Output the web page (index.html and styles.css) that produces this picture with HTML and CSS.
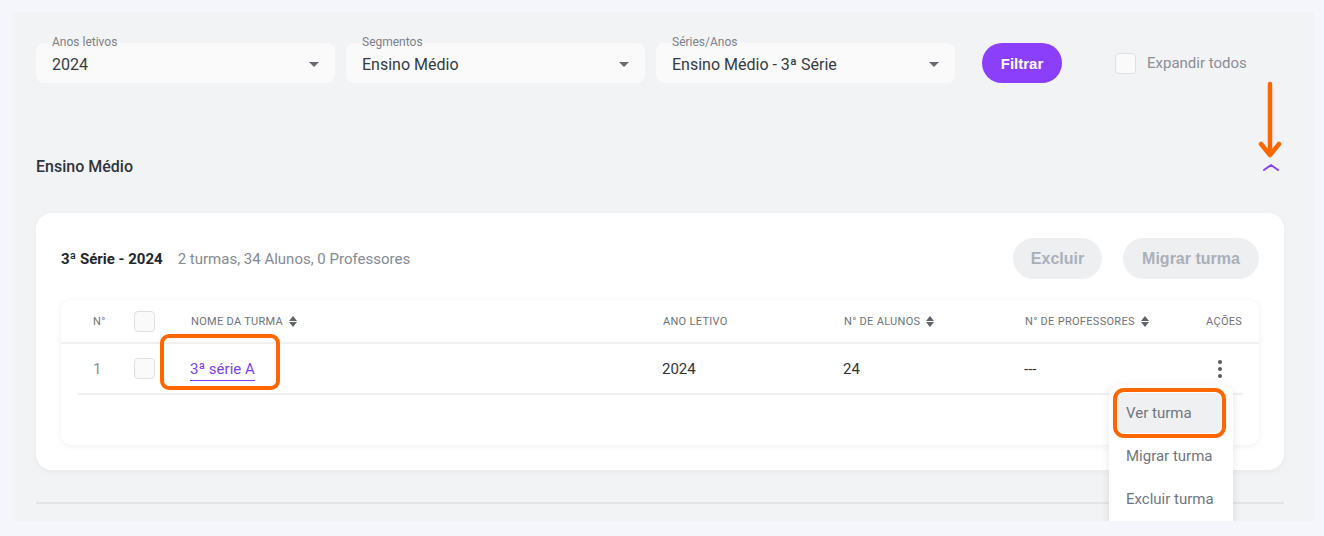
FILE: index.html
```html
<!DOCTYPE html>
<html lang="pt-BR">
<head>
<meta charset="utf-8">
<title>Turmas</title>
<link rel="stylesheet" href="styles.css">
</head>
<body>
<div class="page">
  <div class="filters">
    <div class="select">
      <span class="select-label">Anos letivos</span>
      <span class="select-value">2024</span>
      <span class="caret"></span>
    </div>
    <div class="select">
      <span class="select-label">Segmentos</span>
      <span class="select-value">Ensino Médio</span>
      <span class="caret"></span>
    </div>
    <div class="select">
      <span class="select-label">Séries/Anos</span>
      <span class="select-value">Ensino Médio - 3ª Série</span>
      <span class="caret"></span>
    </div>
    <button class="btn-primary">Filtrar</button>
    <label class="expand">
      <span class="checkbox"></span>
      <span>Expandir todos</span>
    </label>
  </div>

  <div class="section-head">
    <span class="section-title">Ensino Médio</span>
    <svg class="chevron" width="18" height="8" viewBox="0 0 18 8"><path d="M2 7 L9 2 L16 7" fill="none" stroke="#8b3ffb" stroke-width="2" stroke-linecap="round" stroke-linejoin="round"/></svg>
  </div>

  <div class="card">
    <div class="card-head">
      <div class="card-title"><strong>3ª Série - 2024</strong><span class="card-meta">2 turmas, 34 Alunos, 0 Professores</span></div>
      <div class="card-actions">
        <button class="btn-muted btn-excluir">Excluir</button>
        <button class="btn-muted btn-migrar">Migrar turma</button>
      </div>
    </div>

    <div class="table">
      <div class="thead">
        <span class="th">N°</span>
        <span class="cell-check"><span class="checkbox"></span></span>
        <span class="th">Nome da turma <span class="sort"></span></span>
        <span class="th">Ano letivo</span>
        <span class="th">N° de alunos <span class="sort"></span></span>
        <span class="th">N° de professores <span class="sort"></span></span>
        <span class="th th-actions">Ações</span>
      </div>
      <div class="trow">
        <span class="td td-num">1</span>
        <span class="cell-check"><span class="checkbox"></span></span>
        <span class="td"><a class="class-link">3ª série A</a></span>
        <span class="td">2024</span>
        <span class="td">24</span>
        <span class="td">---</span>
        <span class="td td-actions"><span class="kebab"><i></i><i></i><i></i></span></span>
      </div>
    </div>
  </div>

  <div class="divider"></div>
  <div class="next-row"><span class="next-chip"></span></div>

  <svg class="arrow" width="24" height="80" viewBox="0 0 24 80"><path d="M12 3 L12 74 M3 63 L12 74 L21 63" fill="none" stroke="#ff6600" stroke-width="4.5" stroke-linecap="round" stroke-linejoin="round"/></svg>

  <div class="menu">
    <div class="menu-item active">Ver turma</div>
    <div class="menu-item">Migrar turma</div>
    <div class="menu-item">Excluir turma</div>
  </div>
</div>
</body>
</html>
```

FILE: styles.css
```css
* { box-sizing: border-box; }

html, body {
  margin: 0;
  height: 100%;
}

body {
  background: #f5f6fc;
  font-family: Roboto, "Liberation Sans", sans-serif;
  color: #333a44;
  padding: 12px 10px 0 12px;
  overflow: hidden;
}

.page {
  position: relative;
  height: 509px;
  background: #f2f3f5;
  overflow: hidden;
  padding: 31px 30px 0 24px;
}

/* Filters */
.filters {
  display: flex;
  align-items: center;
  height: 40px;
}

.select {
  position: relative;
  width: 299px;
  height: 40px;
  margin-right: 11px;
  background: #fafafa;
  border-radius: 8px;
  display: flex;
  align-items: center;
  padding: 2px 16px 0 16px;
}

.select:nth-child(3) { margin-right: 0; }

.select-label {
  position: absolute;
  left: 12px;
  top: -8px;
  padding: 0 4px;
  font-size: 12px;
  line-height: 14px;
  color: #7d8088;
  background: linear-gradient(to bottom, #f2f3f5 0, #f2f3f5 8px, #fafafa 8px);
}

.select-value {
  flex: 1;
  font-size: 16px;
  color: #333a44;
}

.caret {
  width: 0;
  height: 0;
  border-left: 5px solid transparent;
  border-right: 5px solid transparent;
  border-top: 5px solid #666b73;
}

.btn-primary {
  margin-left: 27px;
  width: 80px;
  height: 40px;
  border: none;
  border-radius: 20px;
  background: #8b3ffb;
  color: #fff;
  font-family: "Liberation Sans", Arial, sans-serif;
  font-weight: bold;
  font-size: 15px;
}

.expand {
  display: flex;
  align-items: center;
  margin-left: 53px;
  font-size: 15px;
  color: #8a8e95;
  gap: 11px;
}

.checkbox {
  display: inline-block;
  width: 21px;
  height: 21px;
  border: 1px solid #dfe0e3;
  border-radius: 4px;
  background: #fafafa;
}

/* Section */
.section-head {
  display: flex;
  align-items: center;
  justify-content: space-between;
  height: 40px;
  margin-top: 63px;
  padding-right: 4px;
}

.section-title {
  font-size: 16px;
  font-weight: 500;
  color: #2f343b;
}

.chevron { margin-top: 2px; }

/* Card */
.card {
  margin-top: 27px;
  height: 257px;
  background: #fff;
  border-radius: 16px;
  box-shadow: 0 2px 6px rgba(0, 0, 0, 0.04);
  padding: 25px;
}

.card-head {
  display: flex;
  align-items: center;
  justify-content: space-between;
  height: 41px;
}

.card-title {
  font-size: 15px;
  display: flex;
  align-items: baseline;
}

.card-title strong {
  font-weight: 700;
  color: #22262c;
}

.card-meta {
  margin-left: 15px;
  color: #858991;
}

.card-actions {
  display: flex;
  gap: 21px;
}

.btn-muted {
  height: 41px;
  border: none;
  border-radius: 21px;
  background: #eeeff1;
  color: #aab0b9;
  font-family: "Liberation Sans", Arial, sans-serif;
  font-weight: bold;
  font-size: 16px;
  padding: 0 17px;
}

.btn-excluir { width: 89px; }
.btn-migrar { width: 136px; }

/* Table */
.table {
  margin-top: 21px;
  height: 145px;
  border-radius: 10px;
  background: #fff;
  box-shadow: 0 1px 6px rgba(0, 0, 0, 0.07);
}

.thead, .trow {
  display: grid;
  align-items: center;
}

.thead {
  grid-template-columns: 41px 57px 472px 181px 181px 181px 37px;
  height: 44px;
  padding: 0 16px 0 32px;
  border-bottom: 2px solid #f0f0f2;
}

.th {
  font-size: 11px;
  letter-spacing: 0.3px;
  text-transform: uppercase;
  color: #6e727a;
  display: flex;
  align-items: center;
  gap: 6px;
  white-space: nowrap;
}

.th:first-child { text-transform: none; }

.sort {
  position: relative;
  display: inline-block;
  width: 8px;
  height: 11px;
}

.sort::before, .sort::after {
  content: "";
  position: absolute;
  left: 0;
  border-left: 4px solid transparent;
  border-right: 4px solid transparent;
}

.sort::before {
  top: 0;
  border-bottom: 5px solid #5f636b;
}

.sort::after {
  bottom: 0;
  border-top: 5px solid #5f636b;
}

.cell-check { display: flex; align-items: center; }

.trow {
  grid-template-columns: 41px 56px 472px 181px 181px 181px 37px;
  height: 51px;
  margin: 0 16px 0 17px;
  padding-left: 15px;
  border-bottom: 2px solid #eeeff1;
}

.td {
  font-size: 15px;
  color: #2f343b;
}

.td-num { color: #8a8e95; }

.class-link {
  position: relative;
  color: #7b3ff2;
  border-bottom: 1px solid #7b3ff2;
  padding-bottom: 2px;
  cursor: pointer;
}

.class-link::after {
  content: "";
  position: absolute;
  left: -30px;
  right: -25px;
  top: -26px;
  bottom: -10px;
  border: 4px solid #ff6600;
  border-radius: 9px;
}

.td-actions { display: flex; padding-left: 13px; }

.kebab {
  display: flex;
  flex-direction: column;
  gap: 3px;
}

.kebab i {
  display: block;
  width: 4px;
  height: 4px;
  border-radius: 50%;
  background: #555a62;
}

/* Bottom */
.divider {
  margin-top: 32px;
  height: 2px;
  background: #e3e4e7;
}

.next-row {
  padding-left: 116px;
  margin-top: 17px;
}

.next-chip {
  display: block;
  width: 195px;
  height: 30px;
  border-radius: 6px;
  background: #f8d9c4;
}

/* Overlays */
.arrow {
  position: absolute;
  left: 1246px;
  top: 69px;
}

.menu {
  position: absolute;
  left: 1097px;
  top: 373px;
  width: 124px;
  height: 150px;
  background: #fff;
  border-radius: 10px;
  box-shadow: 0 2px 10px rgba(0, 0, 0, 0.10);
  padding: 8px 12px 0 9px;
  display: flex;
  flex-direction: column;
  gap: 3px;
}

.menu-item {
  height: 40px;
  display: flex;
  align-items: center;
  padding-left: 8px;
  font-size: 15px;
  color: #6f7580;
  border-radius: 6px;
  white-space: nowrap;
}

.menu-item.active {
  background: #eff0f2;
  outline: 4px solid #ff6600;
  outline-offset: 1px;
}
```
